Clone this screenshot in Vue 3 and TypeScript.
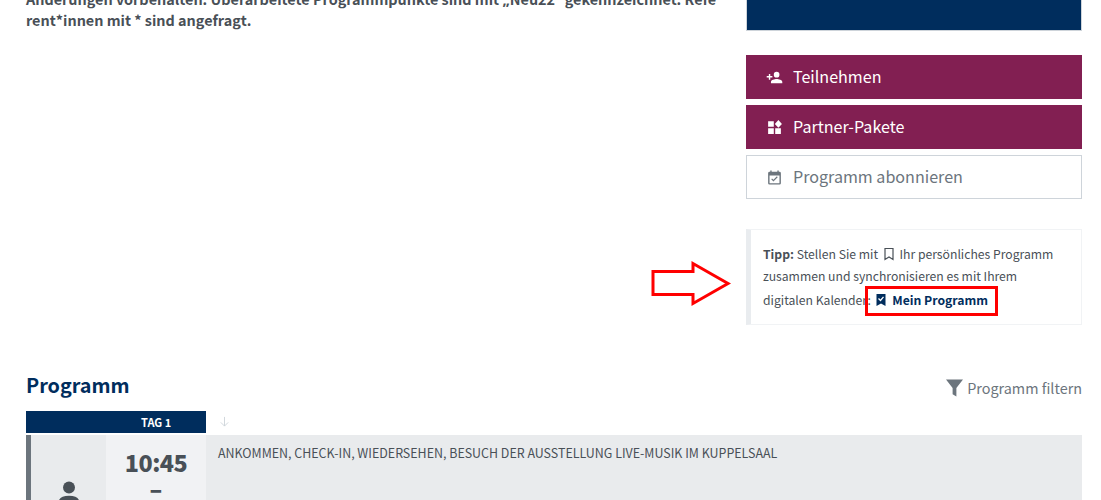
<script setup lang="ts">
</script>

<template>
  <div class="page">
    <div class="top">
      <div class="note">
        <div class="note-line">Änderungen vorbehalten. Überarbeitete Programmpunkte sind mit <span class="quote">„</span>Neu22<span class="quote">“</span> gekennzeichnet. Refe</div>
        <div class="note-line">rent*innen mit * sind angefragt.</div>
      </div>
      <aside class="side">
        <div class="banner"></div>
        <div class="buttons">
          <a class="btn primary">
            <svg class="ico" viewBox="0 0 24 24" fill="#fff"><path d="M15 12a4 4 0 1 0 0-8 4 4 0 0 0 0 8zm-9-2V7H4v3H1v2h3v3h2v-3h3v-2H6zm9 4c-2.7 0-8 1.3-8 4v2h16v-2c0-2.700-5.300-4-8-4z"/></svg>
            <span>Teilnehmen</span>
          </a>
          <a class="btn primary">
            <svg class="ico" viewBox="0 0 24 24" fill="#fff"><path d="M3 3h8v8H3zM3 13h8v8H3zM13 13h8v8h-8zM17.500 1.500 22.500 7l-5 5.500L12.500 7z"/></svg>
            <span>Partner-Pakete</span>
          </a>
          <a class="btn ghost">
            <svg class="ico" viewBox="0 0 24 24" fill="#6c757d"><path fill-rule="evenodd" d="M19 4h-1V2h-2v2H8V2H6v2H5a2 2 0 0 0-2 2v14a2 2 0 0 0 2 2h14a2 2 0 0 0 2-2V6a2 2 0 0 0-2-2zm0 16H5V9h14v11zm-2.500-8.500-1.100-1.100-4.900 4.900-2-2-1.100 1.100 3.100 3.100 6-6z"/></svg>
            <span>Programm abonnieren</span>
          </a>
        </div>
        <div class="tip-wrap">
          <svg class="arrow" width="82" height="48" viewBox="0 0 82 48" fill="#fff" stroke="#f00" stroke-width="3"><path d="M2 11.500H42V3.500L77 23.500 42 43.500V34.500H2z"/></svg>
          <div class="tip">
            <div class="tip-line"><b>Tipp:</b> Stellen Sie mit
              <svg class="bm" viewBox="0 0 12 14" fill="none" stroke="#495057" stroke-width="1.200"><path d="M2 1.500h8v11L6 10l-4 2.500z"/></svg>
              Ihr persönliches Programm</div>
            <div class="tip-line">zusammen und synchronisieren es mit Ihrem</div>
            <div class="tip-line last">digitalen Kalender:
              <span class="mine">
                <svg class="bm2" viewBox="0 0 12 14"><path fill="#002d5d" d="M1.500 1h9v12L6 10.500 1.500 13z"/><path fill="none" stroke="#fff" stroke-width="1.300" d="M3.500 5.500 5.500 7.500 8.500 3.800"/></svg>
                Mein Programm
              </span>
            </div>
          </div>
        </div>
      </aside>
    </div>

    <section class="program">
      <header class="prog-head">
        <h2>Programm</h2>
        <a class="filter">
          <svg class="funnel" viewBox="0 0 18 18" fill="#6c757d"><path d="M0 0h18L11 9v9l-4-2.500V9z"/></svg>
          Programm filtern
        </a>
      </header>
      <div class="day-row">
        <div class="day">TAG 1</div>
        <svg class="down" viewBox="0 0 12 12" fill="none" stroke="#ced4da" stroke-width="1"><path d="M6 1v10M2 7l4 4 4-4"/></svg>
      </div>
      <div class="entry">
        <div class="who">
          <svg class="person" viewBox="0 0 24 26" fill="#495057"><circle cx="12" cy="7" r="6.500"/><path d="M0 26c0-7 4-10 12-10s12 3 12 10z"/></svg>
        </div>
        <div class="time">
          <div class="clock">10:45</div>
          <div class="dash">–</div>
        </div>
        <div class="desc">ANKOMMEN, CHECK-IN, WIEDERSEHEN, BESUCH DER AUSSTELLUNG LIVE-MUSIK IM KUPPELSAAL</div>
      </div>
    </section>
  </div>
</template>

<style>
html, body { margin: 0; background: #fff; overflow: hidden; }
</style>

<style scoped>
.page {
  width: 1101px;
  height: 500px;
  overflow: hidden;
  padding: 0 19px 0 26px;
  box-sizing: border-box;
  font-family: "Noto Sans CJK SC", "Source Sans Pro", "Noto Sans", sans-serif;
  color: #495057;
}
.top {
  display: grid;
  grid-template-columns: 694px 336px;
  column-gap: 26px;
}
.note {
  margin-top: -11px;
  font-size: 14.400px;
  font-weight: 700;
  line-height: 20px;
}
.note-line { white-space: nowrap; }
.quote { font-family: "Noto Sans", sans-serif; }
.side { display: flex; flex-direction: column; }
.banner {
  height: 31px;
  background: #002d5d;
  border: 1px solid #ced4da;
  border-top: 0;
  box-sizing: border-box;
}
.buttons {
  margin-top: 24px;
  display: flex;
  flex-direction: column;
  gap: 6px;
}
.btn {
  height: 44px;
  box-sizing: border-box;
  display: flex;
  align-items: center;
  gap: 10px;
  padding: 0 0 2px 20px;
  font-size: 16.100px;
  font-weight: 400;
  line-height: 42px;
}
.primary { background: #821f52; color: #fff; }
.ghost { background: #fff; border: 1px solid #ced4da; color: #6c757d; padding: 0 0 2px 19px; }
.ico { width: 17px; height: 17px; flex: none; margin-top: 2px; }
.tip-wrap { position: relative; margin-top: 30px; }
.arrow { position: absolute; left: -95px; top: 31px; }
.tip {
  height: 96px;
  box-sizing: border-box;
  border: 1px solid #f1f3f5;
  border-left: 5px solid #e9ecef;
  padding: 13px 12px 0 12px;
  font-size: 12.200px;
  line-height: 22px;
}
.tip-line { white-space: nowrap; }
.tip-line.last { margin-top: 2px; }
.tip-line b { font-weight: 700; }
.bm { width: 12px; height: 14px; vertical-align: -2px; margin: 0 2px; }
.mine {
  display: inline-block;
  position: relative;
  margin-left: -9px;
  border: 3px solid #f00;
  box-sizing: border-box;
  height: 30px;
  line-height: 23px;
  width: 133px;
  padding-left: 7px;
  color: #002d5d;
  font-weight: 700;
  margin-top: -8px;
  vertical-align: 0;
  white-space: nowrap;
}
.bm2 { width: 12px; height: 14px; vertical-align: -2px; margin-right: 3px; }
.program { margin-top: 41px; margin-right: 0; }
.prog-head {
  display: flex;
  justify-content: space-between;
  align-items: center;
  height: 36px;
}
h2 {
  margin: 1px 0 0;
  font-size: 19.800px;
  font-weight: 700;
  color: #002d5d;
  line-height: 36px;
}
.filter {
  display: flex;
  align-items: center;
  gap: 4px;
  color: #6c757d;
  font-size: 14.400px;
  line-height: 22px;
  margin-top: 7px;
}
.funnel { width: 17px; height: 18px; }
.day-row {
  margin-top: 9px;
  display: flex;
  align-items: flex-start;
  height: 24px;
  gap: 13px;
}
.day {
  width: 180px;
  height: 22px;
  box-sizing: border-box;
  background: #002d5d;
  color: #fff;
  font-size: 11px;
  font-weight: 700;
  line-height: 22px;
  padding-left: 115px;
}
.down { width: 11px; height: 11px; margin-top: 5px; }
.entry {
  display: flex;
  height: 70px;
  background: #e9ebed;
}
.who {
  width: 80px;
  box-sizing: border-box;
  border-left: 5px solid #6c757d;
  padding: 46px 0 0 27px;
}
.person { width: 22px; height: 24px; display: block; }
.time {
  width: 100px;
  background: #f1f2f4;
  text-align: center;
  font-weight: 700;
  color: #495057;
}
.clock { font-size: 23.300px; font-weight: 900; letter-spacing: -0.5px; line-height: 28px; margin-top: 13px; }
.dash { font-size: 23.300px; font-weight: 900; line-height: 22px; margin-top: 1px; }
.desc {
  padding: 8px 0 0 12px;
  font-size: 12.450px;
  line-height: 20px;
  white-space: nowrap;
}
</style>
